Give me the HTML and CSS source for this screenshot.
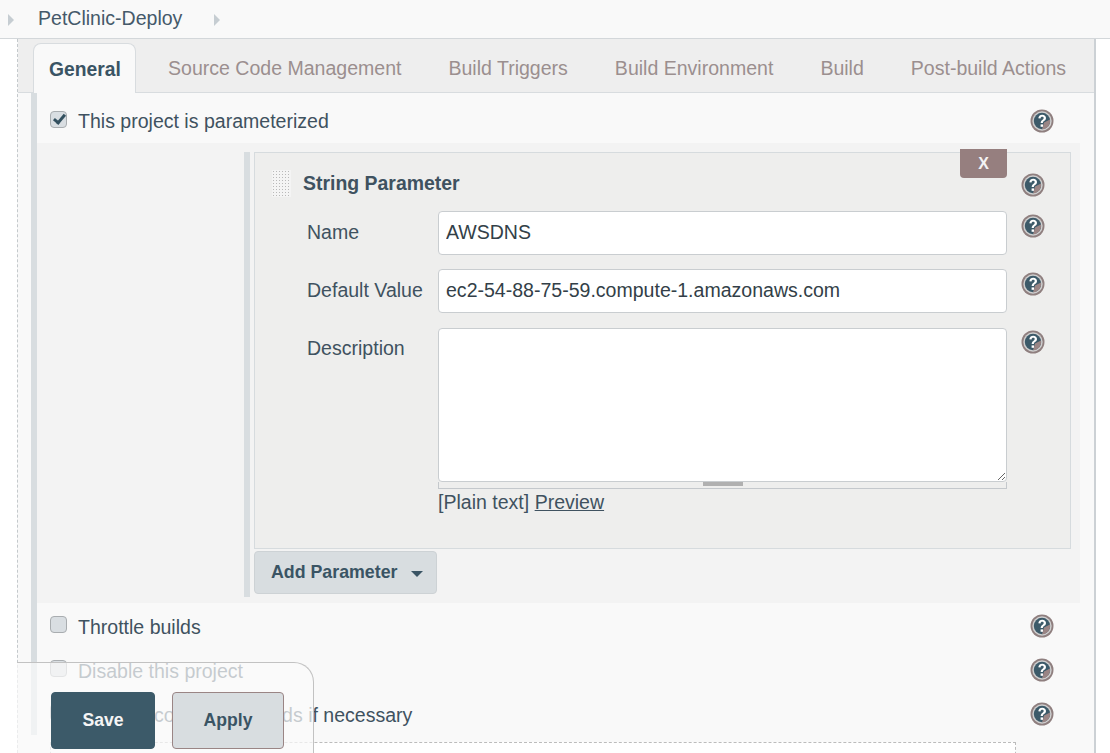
FILE: index.html
```html
<!DOCTYPE html>
<html lang="en">
<head>
  <meta charset="UTF-8" />
  <meta name="viewport" content="width=device-width, initial-scale=1.0"/>
  <title>PetClinic-Deploy Config</title>

  <link rel="stylesheet" href="styles.css">
</head>

<body>
  <svg class="defs" width="0" height="0">
    <symbol id="help" viewBox="0 0 24 24">
      <circle cx="12" cy="12" r="11.5" fill="#8f7f7f"/>
      <circle cx="12" cy="12" r="9.7" fill="#cfcfcf"/>
      <circle cx="12" cy="12" r="8.2" fill="#3c5a69"/>
      <path d="M12 20.2a8.2 8.2 0 0 0 8-9.8l-6 3.2z" fill="#9a8585"/>
      <path d="M8.3 9.2c.3-2.3 2-3.4 3.9-3.4 2.2 0 3.8 1.3 3.8 3.2 0 1.6-1 2.4-2 3.1-.8.6-1.1 1-1.1 2h-2.2c0-1.7.6-2.5 1.6-3.2.8-.6 1.4-1 1.4-1.8 0-.8-.6-1.3-1.5-1.3-1 0-1.6.6-1.7 1.7z" fill="#fff"/>
      <rect x="10.6" y="15.4" width="2.4" height="2.4" fill="#fff"/>
    </symbol>
  </svg>

  <div class="breadcrumbs">
    <span class="crumb-arrow"></span>
    <a class="crumb" href="#">PetClinic-Deploy</a>
    <span class="crumb-arrow"></span>
  </div>

  <div class="main">
    <div class="tabbar">
      <a class="tab active" href="#">General</a>
      <a class="tab first" href="#">Source Code Management</a>
      <a class="tab" href="#">Build Triggers</a>
      <a class="tab" href="#">Build Environment</a>
      <a class="tab" href="#">Build</a>
      <a class="tab" href="#">Post-build Actions</a>
    </div>

    <div class="section">
      <div class="row">
        <input type="checkbox" class="check" checked>
        <label>This project is parameterized</label>
        <svg class="help"><use href="#help"/></svg>
      </div>

      <div class="nested">
        <div class="nested-bar">
          <div class="panel">
            <button class="delete" type="button">X</button>
            <div class="panel-head">
              <span class="handle"></span>
              <span class="panel-title">String Parameter</span>
              <svg class="help"><use href="#help"/></svg>
            </div>

            <div class="field">
              <label>Name</label>
              <input class="text-input" type="text" value="AWSDNS">
              <svg class="help"><use href="#help"/></svg>
            </div>
            <div class="field">
              <label>Default Value</label>
              <input class="text-input" type="text" value="ec2-54-88-75-59.compute-1.amazonaws.com">
              <svg class="help"><use href="#help"/></svg>
            </div>
            <div class="field desc-field">
              <label>Description</label>
              <div class="desc-wrap">
                <textarea class="desc"></textarea>
                <div class="grip"><span></span></div>
                <div class="plain">[Plain text] <a href="#">Preview</a></div>
              </div>
              <svg class="help"><use href="#help"/></svg>
            </div>
          </div>

          <button class="add-param" type="button">Add Parameter <span class="caret"></span></button>
        </div>
      </div>

      <div class="row">
        <input type="checkbox" class="check">
        <label>Throttle builds</label>
        <svg class="help"><use href="#help"/></svg>
      </div>
      <div class="row">
        <input type="checkbox" class="check">
        <label>Disable this project</label>
        <svg class="help"><use href="#help"/></svg>
      </div>
      <div class="row last">
        <input type="checkbox" class="check">
        <label>Execute concurrent builds if necessary</label>
        <svg class="help"><use href="#help"/></svg>
      </div>
    </div>

    <div class="next-box"></div>
  </div>

  <div class="savebar">
    <button class="btn-save" type="button">Save</button>
    <button class="btn-apply" type="button">Apply</button>
  </div>
</body>
</html>
```

FILE: styles.css
```css
html, body {
  height: 100%;
}

body {
  font-family: 'Liberation Sans', Arial, sans-serif;
  font-size: 19.55px;
  color: #3f5260;
  background: #fff;
  margin: 0;
  padding: 0;
  overflow: hidden;
  position: relative;
}

a {
  color: inherit;
  text-decoration: none;
}

.defs {
  position: absolute;
}

/* Breadcrumbs */
.breadcrumbs {
  height: 38px;
  box-sizing: content-box;
  background: #f9f9f9;
  border-bottom: 1px solid #d3d7da;
  display: flex;
  align-items: center;
  padding-left: 8px;
}

.crumb {
  margin: 0 32px 2px 24px;
  color: #45596a;
}

.crumb-arrow {
  width: 0;
  height: 0;
  border-left: 6px solid #c6cdd2;
  border-top: 6px solid transparent;
  border-bottom: 6px solid transparent;
  margin-top: 1px;
}

/* Main box */
.main {
  margin-left: 17px;
  width: 1079px;
  height: 714px;
  box-sizing: border-box;
  background: #f9f9f9;
  border-left: 1px dashed #c4c9cc;
  border-right: 2px solid #ccd1d5;
}

.tabbar {
  height: 54px;
  box-sizing: border-box;
  background: #eeeeee;
  border-bottom: 1px solid #d8dcdf;
  display: flex;
  align-items: flex-end;
  padding-left: 15px;
}

.tab {
  display: block;
  padding: 0 23.5px;
  line-height: 51px;
  height: 49px;
  color: #9b8f8f;
  white-space: nowrap;
}

.tab.first {
  margin-left: 8.5px;
}

.tab.active {
  padding: 0 15px;
  width: 71px;
  height: 49px;
  background: #f9f9f9;
  color: #3a5464;
  font-weight: bold;
  font-size: 19.3px;
  border: 1px solid #d8dcdf;
  border-bottom: none;
  border-radius: 8px 8px 0 0;
  margin-bottom: -1px;
  position: relative;
}

/* Section */
.section {
  margin: 0 14px 0 13px;
  padding-top: 6px;
  border-left: 6px solid #d8dde0;
}

.row {
  height: 44px;
  display: flex;
  align-items: center;
  padding: 0 26px 0 13px;
}

.row.last {
  height: 42px;
  box-sizing: border-box;
  padding-top: 2px;
  padding-bottom: 0;
}

.row label {
  flex: 1;
  padding-top: 1px;
}

.check {
  appearance: none;
  width: 17px;
  height: 17px;
  margin: 0 11px 0 0;
  box-sizing: border-box;
  background: #d9dee2;
  border: 1px solid #a9adb0;
  border-radius: 4px;
  position: relative;
  top: -2px;
}

.check:checked::after {
  content: "";
  position: absolute;
  left: 4.5px;
  top: 0.5px;
  width: 4px;
  height: 9px;
  border-right: 3px solid #33505f;
  border-bottom: 3px solid #33505f;
  transform: rotate(40deg);
}

.help {
  width: 24px;
  height: 24px;
  flex: none;
}

.nested ~ .row .help {
  margin-top: -2px;
}

.nested ~ .row .check {
  top: -3px;
}

/* Nested parameter block */
.nested {
  background: #f3f3f3;
  margin-bottom: 2px;
  padding: 9px 0 6px 207px;
}

.nested-bar {
  border-left: 6px solid #d8dde0;
  padding-left: 4px;
  padding-bottom: 3px;
  width: 827px;
  box-sizing: border-box;
}

.panel {
  position: relative;
  height: 397px;
  width: 817px;
  box-sizing: border-box;
  background: #eeeeed;
  border: 1px solid #d6dbde;
}

.delete {
  position: absolute;
  top: -4px;
  left: 705px;
  width: 47px;
  height: 29px;
  border: none;
  border-radius: 0 0 4px 4px;
  background: #967f7f;
  color: #f3f3f3;
  font: bold 16px 'Liberation Sans', Arial, sans-serif;
  padding: 0;
}

.panel-head {
  height: 58px;
  box-sizing: border-box;
  padding: 17px 0 0 17px;
  display: flex;
  align-items: flex-start;
}

.handle {
  width: 19px;
  height: 27px;
  flex: none;
  margin-right: 12px;
  background-color: #f4f4f4;
  background-image: radial-gradient(#b9b9b9 1px, transparent 1px);
  background-size: 3px 3px;
}

.panel-title {
  font-weight: bold;
  font-size: 19.45px;
  line-height: 27px;
  width: 718px;
}

.panel-head .help {
  margin: 3px 0 0 0;
}

.field {
  display: flex;
  align-items: flex-start;
  padding-left: 52px;
  margin-bottom: 14px;
}

.field label {
  width: 131px;
  flex: none;
  line-height: 42px;
}

.field .help {
  margin: 3px 0 0 14px;
}

.desc-field {
  margin-top: 15px;
}

.desc-field .help {
  margin-top: 2px;
}

.desc-field label {
  line-height: 40px;
}

.text-input {
  width: 569px;
  height: 44px;
  box-sizing: border-box;
  flex: none;
  padding: 0 7px 2px;
  border: 1px solid #c9cdd0;
  border-radius: 4px;
  background: #fff;
  color: #333f48;
  font: 19.55px 'Liberation Sans', Arial, sans-serif;
}

.desc-wrap {
  width: 569px;
  flex: none;
}

.desc {
  display: block;
  width: 100%;
  height: 154px;
  box-sizing: border-box;
  border: 1px solid #c9cdd0;
  border-radius: 4px;
  background: #fff;
  resize: vertical;
}

.grip {
  height: 7px;
  border: 1px solid #c4c8cc;
  border-top: none;
  box-sizing: border-box;
  display: flex;
  justify-content: center;
}

.grip span {
  width: 40px;
  height: 4px;
  background: #b0b0b0;
}

.plain {
  margin-top: 1px;
  line-height: 24px;
}

.plain a {
  text-decoration: underline;
}

.add-param {
  margin-top: 2px;
  width: 183px;
  height: 43px;
  display: flex;
  align-items: center;
  padding: 0 0 0 16px;
  background: #d8dde0;
  border: 1px solid #cdd2d5;
  border-radius: 4px;
  color: #3a5464;
  font: bold 17.8px 'Liberation Sans', Arial, sans-serif;
}

.caret {
  width: 0;
  height: 0;
  margin: 2px 0 0 13px;
  border-top: 6px solid #3a5464;
  border-left: 6px solid transparent;
  border-right: 6px solid transparent;
}

.next-box {
  margin: 7px 0 0 32px;
  width: 964px;
  height: 40px;
  background: #fff;
  border: 1px dashed #bcbcbc;
}

/* Floating save bar */
.savebar {
  position: absolute;
  left: 17px;
  bottom: 0;
  width: 297px;
  height: 91px;
  box-sizing: border-box;
  padding: 29px 0 0 34px;
  display: flex;
  align-items: flex-start;
  gap: 17px;
  background: rgba(249, 249, 249, 0.72);
  border-top: 1px solid #c2c2c2;
  border-right: 1px solid #c2c2c2;
  border-radius: 0 20px 0 0;
}

.btn-save,
.btn-apply {
  height: 57px;
  border-radius: 4px;
  font: bold 17.6px 'Liberation Sans', Arial, sans-serif;
  padding: 0;
}

.btn-save {
  width: 104px;
  background: #3c5a69;
  border: 1px solid #3c5a69;
  color: #f5f5f5;
}

.btn-apply {
  width: 112px;
  background: #d8dde0;
  border: 1px solid #9a8585;
  color: #3a5464;
}
```
